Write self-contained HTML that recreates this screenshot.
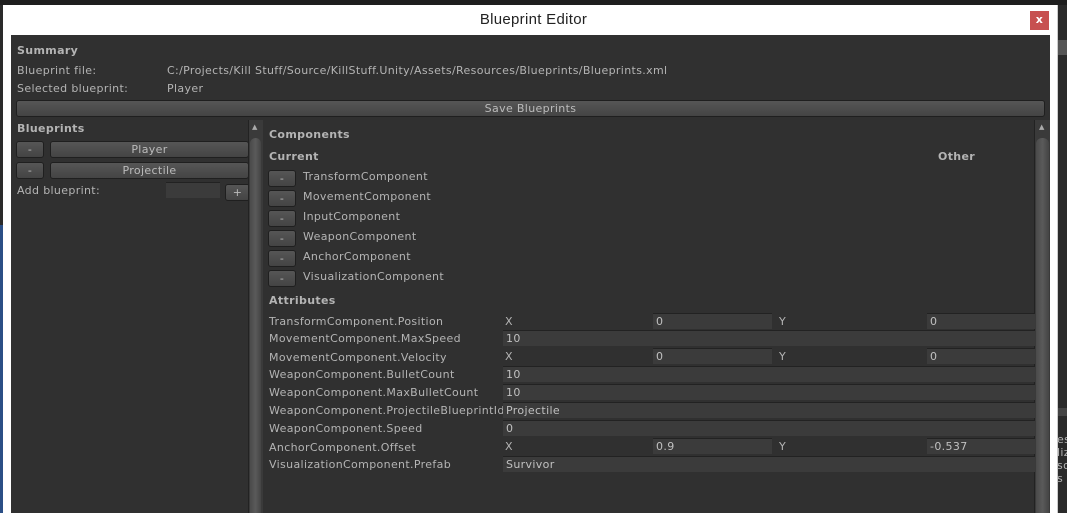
<!DOCTYPE html><html><head><style>
*{margin:0;padding:0;box-sizing:border-box}
body{width:1067px;height:513px;overflow:hidden;background:#2a2a2a;position:relative;font-family:"DejaVu Sans","Liberation Sans",sans-serif;font-size:11px;letter-spacing:0.35px;color:#b4b4b4}
.a{position:absolute;white-space:nowrap}
.btn{position:absolute;background:linear-gradient(#565656,#444);border:1px solid #1f1f1f;border-radius:3px;color:#bbb;text-align:center;font-size:11px;line-height:15px}
.f{position:absolute;background:#3b3b3b;border-top:1px solid #222;height:16px;padding-left:3px;line-height:16px;color:#c0c0c0}
.b{font-weight:bold}
</style></head><body>
<div class="a" style="left:0;top:0;width:1067px;height:5px;background:#1e1e1e"></div>
<div class="a" style="left:0;top:225px;width:3px;height:288px;background:#2b4f86"></div>
<div class="a" style="left:3px;top:5px;width:1055px;height:508px;background:#fff;border-right:1px solid #ccc"></div>
<div class="a" style="left:0;width:1067px;text-align:center;font-family:'Liberation Sans',sans-serif;font-size:15px;letter-spacing:0.3px;color:#222;top:11px">Blueprint Editor</div>
<div class="a" style="left:1030px;top:11px;width:19px;height:19px;background:#c75050;color:#fff;font-size:11px;font-weight:bold;text-align:center;line-height:18px">x</div>
<div class="a" style="left:1058px;top:40px;width:9px;height:15px;background:#555"></div>
<div class="a" style="left:1058px;top:415px;width:9px;height:98px;background:#2a2a2a"></div>
<div class="a" style="left:1058px;top:408px;width:9px;height:8px;background:#444"></div>
<div class="a" style="left:1057px;top:433px;font-size:11px">es<br>liz<br>so<br>s</div>
<div class="a" style="left:11px;top:35px;width:1039px;height:478px;background:#303030"></div>
<div class="a b" style="left:17px;top:44px">Summary</div>
<div class="a" style="left:17px;top:64px">Blueprint file:</div>
<div class="a" style="left:167px;top:64px">C:/Projects/Kill Stuff/Source/KillStuff.Unity/Assets/Resources/Blueprints/Blueprints.xml</div>
<div class="a" style="left:17px;top:82px">Selected blueprint:</div>
<div class="a" style="left:167px;top:82px">Player</div>
<div class="btn" style="left:16px;top:100px;width:1029px;height:17px">Save Blueprints</div>
<div class="a b" style="left:17px;top:122px">Blueprints</div>
<div class="btn" style="left:16px;top:141px;width:28px;height:17px">-</div>
<div class="btn" style="left:50px;top:141px;width:199px;height:17px">Player</div>
<div class="btn" style="left:16px;top:162px;width:28px;height:17px">-</div>
<div class="btn" style="left:50px;top:162px;width:199px;height:17px">Projectile</div>
<div class="a" style="left:17px;top:184px">Add blueprint:</div>
<div class="a" style="left:166px;top:182px;width:54px;height:16px;background:#3b3b3b;border-top:1px solid #222"></div>
<div class="btn" style="left:225px;top:184px;width:25px;height:17px">+</div>
<div class="a" style="left:248px;top:120px;width:15px;height:393px;background:#3a3a3a;border-left:1px solid #222"></div>
<div class="a" style="left:250px;top:138px;width:11px;height:375px;background:linear-gradient(90deg,#4a4a4a,#5a5a5a,#444);border-radius:6px 6px 0 0"></div>
<div class="a" style="left:252px;top:123px;font-size:7px;color:#aaa">▲</div>
<div class="a" style="left:1034px;top:120px;width:16px;height:393px;background:#3a3a3a;border-left:1px solid #222"></div>
<div class="a" style="left:1036px;top:138px;width:13px;height:375px;background:linear-gradient(90deg,#4a4a4a,#5a5a5a,#444);border-radius:6px 6px 0 0"></div>
<div class="a" style="left:1039px;top:123px;font-size:7px;color:#aaa">▲</div>
<div class="a b" style="left:269px;top:128px">Components</div>
<div class="a b" style="left:269px;top:150px">Current</div>
<div class="a b" style="left:938px;top:150px">Other</div>
<div class="btn" style="left:268px;top:170px;width:28px;height:17px">-</div><div class="a" style="left:303px;top:170px">TransformComponent</div>
<div class="btn" style="left:268px;top:190px;width:28px;height:17px">-</div><div class="a" style="left:303px;top:190px">MovementComponent</div>
<div class="btn" style="left:268px;top:210px;width:28px;height:17px">-</div><div class="a" style="left:303px;top:210px">InputComponent</div>
<div class="btn" style="left:268px;top:230px;width:28px;height:17px">-</div><div class="a" style="left:303px;top:230px">WeaponComponent</div>
<div class="btn" style="left:268px;top:250px;width:28px;height:17px">-</div><div class="a" style="left:303px;top:250px">AnchorComponent</div>
<div class="btn" style="left:268px;top:270px;width:28px;height:17px">-</div><div class="a" style="left:303px;top:270px">VisualizationComponent</div>
<div class="a b" style="left:269px;top:294px">Attributes</div>
<div class="a" style="left:269px;top:315px">TransformComponent.Position</div>
<div class="a" style="left:505px;top:315px">X</div><div class="f" style="left:653px;top:313px;width:119px">0</div>
<div class="a" style="left:779px;top:315px">Y</div><div class="f" style="left:927px;top:313px;width:108px">0</div>
<div class="a" style="left:269px;top:332px">MovementComponent.MaxSpeed</div>
<div class="f" style="left:503px;top:330px;width:532px">10</div>
<div class="a" style="left:269px;top:351px">MovementComponent.Velocity</div>
<div class="a" style="left:505px;top:350px">X</div><div class="f" style="left:653px;top:348px;width:119px">0</div>
<div class="a" style="left:779px;top:350px">Y</div><div class="f" style="left:927px;top:348px;width:108px">0</div>
<div class="a" style="left:269px;top:368px">WeaponComponent.BulletCount</div>
<div class="f" style="left:503px;top:366px;width:532px">10</div>
<div class="a" style="left:269px;top:386px">WeaponComponent.MaxBulletCount</div>
<div class="f" style="left:503px;top:384px;width:532px">10</div>
<div class="a" style="left:269px;top:404px">WeaponComponent.ProjectileBlueprintId</div>
<div class="f" style="left:503px;top:402px;width:532px">Projectile</div>
<div class="a" style="left:269px;top:422px">WeaponComponent.Speed</div>
<div class="f" style="left:503px;top:420px;width:532px">0</div>
<div class="a" style="left:269px;top:441px">AnchorComponent.Offset</div>
<div class="a" style="left:505px;top:440px">X</div><div class="f" style="left:653px;top:438px;width:119px">0.9</div>
<div class="a" style="left:779px;top:440px">Y</div><div class="f" style="left:927px;top:438px;width:108px">-0.537</div>
<div class="a" style="left:269px;top:458px">VisualizationComponent.Prefab</div>
<div class="f" style="left:503px;top:456px;width:532px">Survivor</div>
</body></html>
